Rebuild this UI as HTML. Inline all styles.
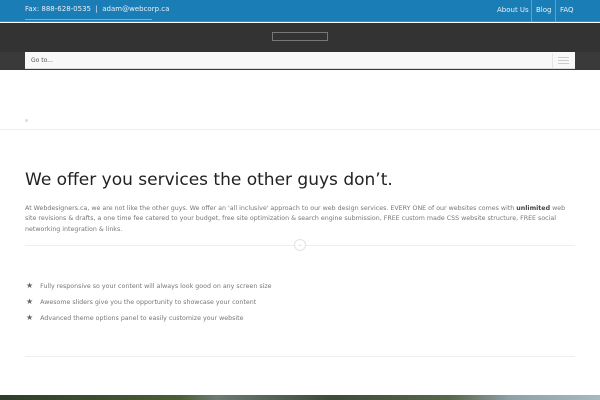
<!DOCTYPE html>
<html><head><style>
*{margin:0;padding:0;box-sizing:border-box}
body{width:600px;height:400px;overflow:hidden;background:#fff;font-family:"DejaVu Sans","Liberation Sans",sans-serif;position:relative}
.a{position:absolute}
.l div{height:16px;line-height:16px}
</style></head><body>
<div class="a" style="left:0;top:0;width:600px;height:22px;background:#1b7db5;border-bottom:1px solid #3b8fc2"></div>
<div class="a" style="left:25px;top:5px;font-size:7px;color:#e6f1f8">Fax: 888-628-0535 &nbsp;|&nbsp; adam@webcorp.ca</div>
<div class="a" style="left:25px;top:19px;width:127px;height:1px;background:#6eb0d8"></div>
<div class="a" style="left:497px;top:6px;font-size:7px;color:#e6f1f8">About Us</div>
<div class="a" style="left:531px;top:0;width:1px;height:22px;background:#5aa3d0"></div>
<div class="a" style="left:536px;top:6px;font-size:7px;color:#e6f1f8">Blog</div>
<div class="a" style="left:555px;top:0;width:1px;height:22px;background:#5aa3d0"></div>
<div class="a" style="left:560px;top:6px;font-size:7px;color:#e6f1f8">FAQ</div>
<div class="a" style="left:0;top:23px;width:600px;height:29px;background:#333"></div>
<div class="a" style="left:272px;top:32px;width:56px;height:9px;border:1px solid #777"></div>
<div class="a" style="left:0;top:52px;width:600px;height:18px;background:#3a3a3a"></div>
<div class="a" style="left:25px;top:52px;width:550px;height:17px;background:#f8f8f8;border-bottom:1px solid #ddd"></div>
<div class="a" style="left:31px;top:57px;font-size:6px;color:#555">Go to...</div>
<div class="a" style="left:552px;top:53px;width:23px;height:16px;border-left:1px solid #e4e4e4"></div>
<div class="a" style="left:558px;top:57px;width:11px;height:1px;background:#ccc;box-shadow:0 3px 0 #ccc,0 6px 0 #ccc"></div>
<div class="a" style="left:25px;top:119px;width:3px;height:3px;border-radius:50%;background:#ddd"></div>
<div class="a" style="left:0;top:129px;width:600px;height:1px;background:#eee"></div>
<div class="a" style="left:25px;top:170px;font-size:17px;color:#222;font-family:'DejaVu Sans',sans-serif">We offer you services the other guys don’t.</div>
<div class="a" style="left:25px;top:204px;width:542px;font-size:6.3px;line-height:10.3px;color:#777">At Webdesigners.ca, we are not like the other guys. We offer an 'all inclusive' approach to our web design services. EVERY ONE of our websites comes with <b style="color:#444">unlimited</b> web site revisions &amp; drafts, a one time fee catered to your budget, free site optimization &amp; search engine submission, FREE custom made CSS website structure, FREE social networking integration &amp; links.</div>
<div class="a" style="left:25px;top:245px;width:550px;height:1px;background:#eee"></div>
<div class="a" style="left:294px;top:239px;width:12px;height:12px;border-radius:50%;border:1px solid #e3e3e3;background:#fff;font-size:6px;color:#ccc;text-align:center;line-height:10px">⌄</div>
<div class="a l" style="left:26px;top:278px;font-size:6.3px;color:#777">
<div><span style="color:#666;margin-right:7px;font-size:8px">★</span>Fully responsive so your content will always look good on any screen size</div>
<div><span style="color:#666;margin-right:7px;font-size:8px">★</span>Awesome sliders give you the opportunity to showcase your content</div>
<div><span style="color:#666;margin-right:7px;font-size:8px">★</span>Advanced theme options panel to easily customize your website</div>
</div>
<div class="a" style="left:25px;top:356px;width:550px;height:1px;background:#eee"></div>
<div class="a" style="left:0;top:395px;width:600px;height:5px;background:linear-gradient(90deg,#2e3d2a 0%,#4a5e36 30%,#6d7a74 36%,#3e4a3a 55%,#58684a 75%,#8fa0a8 85%,#a8b8c0 100%)"></div>
</body></html>
